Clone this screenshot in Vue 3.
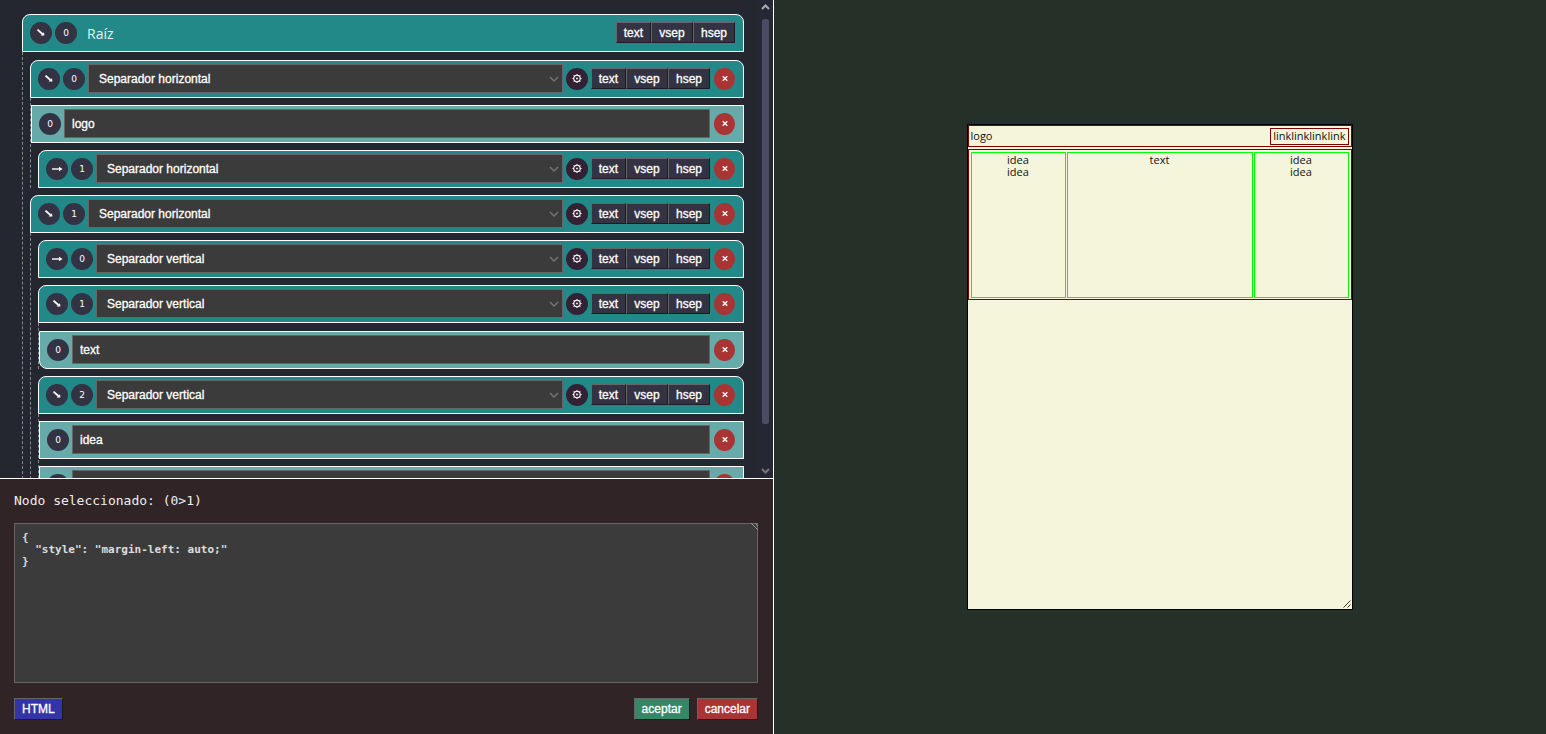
<script setup>
import { ref, h, defineComponent } from 'vue'

const SEP_H = 'Separador horizontal'
const SEP_V = 'Separador vertical'
const kinds = [SEP_H, SEP_V]

const branches = ref([
  {
    index: 0, kind: SEP_H, open: true,
    children: [
      { index: 0, leaf: true, text: 'logo' },
      { index: 1, kind: SEP_H, open: false },
    ],
  },
  {
    index: 1, kind: SEP_H, open: true,
    children: [
      { index: 0, kind: SEP_V, open: false },
      {
        index: 1, kind: SEP_V, open: true,
        children: [{ index: 0, leaf: true, only: true, text: 'text' }],
      },
      {
        index: 2, kind: SEP_V, open: true,
        children: [
          { index: 0, leaf: true, text: 'idea' },
          { index: 1, leaf: true, text: 'idea' },
        ],
      },
    ],
  },
])

const arrow = (open) =>
  h('svg', { class: 'ico', viewBox: '0 0 22 22', 'aria-hidden': 'true' }, open
    ? [
        h('path', { d: 'M7.5 7.6 L12.4 12', class: 'shaft' }),
        h('path', { d: 'M14.4 13.6 L14 10.2 L10.6 13.4 Z', class: 'solid' }),
      ]
    : [
        h('path', { d: 'M6 11 H14', class: 'shaft thin' }),
        h('path', { d: 'M16.6 11 L13 8.8 V13.2 Z', class: 'solid' }),
      ])

const cross = () =>
  h('svg', { class: 'ico', viewBox: '0 0 22 22', 'aria-hidden': 'true' }, [
    h('path', { d: 'M8.7 8.2 L13.3 12.8 M13.3 8.2 L8.7 12.8', class: 'cross' }),
  ])

const gear = () =>
  h('svg', { class: 'ico', viewBox: '0 0 22 22', 'aria-hidden': 'true' }, [
    h('circle', { cx: 11, cy: 10.5, r: 3.2, class: 'ring' }),
    h('circle', { cx: 11, cy: 10.5, r: 0.9, class: 'solid' }),
    h('path', {
      d: 'M11 6V7.5M11 13.5V15M6.5 10.5H8M14 10.5H15.5M7.7 7.2L8.8 8.3M13.2 12.7L14.3 13.8M14.3 7.2L13.2 8.3M8.8 12.7L7.7 13.8',
      class: 'teeth',
    }),
  ])

const TreeNode = defineComponent({
  name: 'TreeNode',
  props: { node: Object },
  setup(props) {
    return () => {
      const n = props.node
      const remove = h('button', { class: 'round remove', 'aria-label': 'Eliminar' }, [cross()])
      if (n.leaf) {
        return h('div', { class: ['row', 'leaf', n.only && 'only'] }, [
          h('button', { class: 'round' }, String(n.index)),
          h('input', {
            class: 'field', type: 'text', 'aria-label': 'Texto', value: n.text,
            onInput: (e) => { n.text = e.target.value },
          }),
          remove,
        ])
      }
      return h('div', { class: 'node' }, [
        h('div', { class: 'row' }, [
          h('button', {
            class: 'round', 'aria-label': 'Plegar',
            onClick: () => { n.open = !n.open },
          }, [arrow(n.open)]),
          h('button', { class: 'round' }, String(n.index)),
          h('div', { class: 'picker' }, [
            h('select', {
              class: 'field', 'aria-label': 'Tipo', value: n.kind,
              onChange: (e) => { n.kind = e.target.value },
            }, kinds.map((k) => h('option', { value: k, selected: k === n.kind }, k))),
            h('svg', { class: 'chevron', viewBox: '0 0 10 6', 'aria-hidden': 'true' }, [
              h('path', { d: 'M1 1 L5 5 L9 1' }),
            ]),
          ]),
          h('button', { class: 'round gear', 'aria-label': 'Ajustes' }, [gear()]),
          h('div', { class: 'adders' }, ['text', 'vsep', 'hsep'].map((t) => h('button', { class: 'btn' }, t))),
          remove,
        ]),
        n.open && n.children
          ? h('div', { class: 'children' }, n.children.map((c) => h(TreeNode, { node: c })))
          : null,
      ])
    }
  },
})

const nodeProps = ref('{\n  "style": "margin-left: auto;"\n}')
</script>

<template>
  <main class="app">
    <section class="editor">
      <div class="tree-pane">
        <div class="tree">
          <div class="row root">
            <button class="round" aria-label="Plegar">
              <svg class="ico" viewBox="0 0 22 22" aria-hidden="true">
                <path class="shaft" d="M7.5 7.6 L12.4 12" />
                <path class="solid" d="M14.4 13.6 L14 10.2 L10.6 13.4 Z" />
              </svg>
            </button>
            <button class="round">0</button>
            <span class="title">Raíz</span>
            <div class="adders">
              <button class="btn">text</button>
              <button class="btn">vsep</button>
              <button class="btn">hsep</button>
            </div>
          </div>
          <div class="children top">
            <TreeNode v-for="b in branches" :key="b.index" :node="b" />
          </div>
        </div>
        <div class="scroll" aria-hidden="true">
          <svg class="tip" viewBox="0 0 9 6"><path d="M1 5 L4.5 1.5 L8 5" /></svg>
          <div class="thumb"></div>
          <svg class="tip end" viewBox="0 0 9 6"><path d="M1 1 L4.5 4.5 L8 1" /></svg>
        </div>
      </div>

      <div class="props">
        <label class="selected" for="props">Nodo seleccionado: (0&gt;1)</label>
        <div class="code">
          <textarea id="props" v-model="nodeProps" spellcheck="false"></textarea>
          <svg class="grip" viewBox="0 0 7 7" aria-hidden="true"><path d="M0 0 L7 7 M4 0 L7 3" /></svg>
        </div>
        <div class="actions">
          <button class="btn html">HTML</button>
          <button class="btn accept">aceptar</button>
          <button class="btn cancel">cancelar</button>
        </div>
      </div>
    </section>

    <section class="preview">
      <div class="page">
        <div class="hbox head">
          <span>logo</span>
          <div class="hbox links"><span>link</span><span>link</span><span>link</span><span>link</span></div>
        </div>
        <div class="hbox body">
          <div class="vbox"><span>idea</span><span>idea</span></div>
          <div class="vbox wide"><span>text</span></div>
          <div class="vbox"><span>idea</span><span>idea</span></div>
        </div>
        <svg class="corner" viewBox="0 0 8 8" aria-hidden="true"><path d="M0.5 7.5 L7.5 0.5 M4.5 7.5 L7.5 4.5" /></svg>
      </div>
    </section>
  </main>
</template>

<style>
body {
  margin: 0;
}
</style>

<style scoped>
.app {
  display: grid;
  grid-template-columns: 1fr 1fr;
  height: 100vh;
  font-family: "Open Sans", "Noto Sans", sans-serif;
}
.app :deep(*) {
  box-sizing: border-box;
}
.editor {
  display: flex;
  flex-direction: column;
  min-height: 0;
  margin-right: -1px;
  border-right: 1px solid #fff;
  position: relative;
}
.tree-pane {
  flex: 1;
  display: flex;
  min-height: 0;
  background: #242730;
}
.tree {
  flex: 1;
  min-width: 0;
  padding: 14px 14px 14px 22px;
  overflow-y: auto;
  scrollbar-width: none;
}
.tree :deep(.row) {
  display: flex;
  align-items: center;
  gap: 3px;
  height: 38px;
  padding: 0 8px 1px 7px;
  background: #228888;
  border: 1px solid #fff;
  border-radius: 8px 8px 0 0;
}
.tree :deep(.leaf) {
  background: #66aaaa;
  border-radius: 0;
}
.tree :deep(.only) {
  margin-top: 1px;
  border-radius: 0 0 8px 8px;
}
.tree :deep(.children) {
  display: flex;
  flex-direction: column;
  gap: 7px;
  padding-top: 7px;
  border-left: 1px dashed #888;
}
.tree :deep(.children.top) {
  padding-top: 8px;
}
.tree :deep(.node) {
  margin-left: 7px;
}
.tree :deep(.round) {
  flex: none;
  display: flex;
  align-items: center;
  justify-content: center;
  width: 22px;
  height: 22px;
  padding: 0;
  border: 0;
  border-radius: 50%;
  background: #333344;
  color: #fff;
  font: 9px "DejaVu Sans", sans-serif;
}
.tree :deep(.gear) {
  background: #332233;
}
.tree :deep(.remove) {
  margin-left: 1px;
  width: 21px;
  background: #aa3333;
}
.tree :deep(.ico) {
  width: 22px;
  height: 22px;
  flex: none;
  fill: none;
  stroke: #fff;
}
.tree :deep(.shaft) {
  stroke-width: 1.8;
}
.tree :deep(.thin) {
  stroke-width: 1.4;
}
.tree :deep(.solid) {
  fill: #fff;
  stroke: none;
}
.tree :deep(.cross) {
  stroke-width: 1.3;
}
.tree :deep(.ring) {
  stroke-width: 1.1;
}
.tree :deep(.teeth) {
  stroke-width: 1;
}
.tree :deep(.picker) {
  flex: 1;
  position: relative;
  display: flex;
}
.tree :deep(.field) {
  flex: 1;
  min-width: 0;
  height: 29px;
  margin: 0;
  padding: 0 7px;
  appearance: none;
  border: 1px solid #666;
  border-radius: 0;
  background: #3b3b3b;
  color: #fff;
  font: 12px "Liberation Sans", sans-serif;
  -webkit-text-stroke: 0.3px #fff;
}
.tree :deep(.picker .field) {
  padding: 0 10px;
}
.tree :deep(.chevron) {
  position: absolute;
  right: 4px;
  top: 12px;
  width: 10px;
  height: 6px;
  fill: none;
  stroke: #777;
  stroke-width: 1.3;
}
.app :deep(.btn) {
  height: 21px;
  padding: 0 7px;
  border: 1px solid;
  border-color: #666 #1c1c1c #1c1c1c #666;
  border-radius: 0;
  background: #333344;
  color: #fff;
  font: 12px "Liberation Sans", sans-serif;
  -webkit-text-stroke: 0.3px #fff;
}
.tree :deep(.adders) {
  display: flex;
}
.tree :deep(.adders .btn + .btn) {
  width: 42px;
}
.title {
  flex: 1;
  padding: 1px 0 0 7px;
  color: #e4f4f4;
  font-size: 14px;
}
.scroll {
  display: flex;
  flex-direction: column;
  align-items: center;
  width: 15px;
  padding: 4px 0;
  background: #252834;
}
.tip {
  width: 9px;
  height: 6px;
  fill: none;
  stroke: #aaa;
  stroke-width: 2;
}
.end {
  stroke: #777;
}
.thumb {
  flex: 1;
  width: 7px;
  margin: 9px 0 44px;
  border-radius: 2px;
  background: #4a4c63;
}
.props {
  display: flex;
  flex-direction: column;
  padding: 14px 15px 14px 14px;
  border-top: 1px solid #fff;
  background: #302427;
}
.selected {
  height: 30px;
  line-height: 16px;
  color: #eee;
  font-family: "DejaVu Sans Mono", monospace;
  font-size: 13px;
}
.code {
  position: relative;
  display: flex;
}
textarea {
  flex: 1;
  height: 160px;
  margin: 0;
  padding: 8px 7px;
  resize: none;
  border: 1px solid #666;
  border-radius: 0;
  background: #3b3b3b;
  color: #ddd;
  font: bold 11px/12px "DejaVu Sans Mono", monospace;
}
.grip {
  position: absolute;
  top: 0;
  right: 0;
  width: 7px;
  height: 7px;
  stroke: #999;
}
.actions {
  display: flex;
  gap: 7px;
  margin-top: 15px;
}
.actions .btn {
  height: 22px;
}
.app .html {
  margin-right: auto;
  background: #3333aa;
}
.app .accept {
  background: #338866;
}
.app .cancel {
  background: #aa3333;
}
.preview {
  display: flex;
  align-items: center;
  justify-content: center;
  background: #253028;
}
.page {
  position: relative;
  display: flex;
  flex-direction: column;
  gap: 2px;
  width: 386px;
  height: 486px;
  border: 1px solid #000;
  background: #f5f5dc;
  color: #111;
  font-size: 11px;
  line-height: 12px;
}
.hbox {
  display: flex;
  border: 1px solid #800000;
}
.head {
  align-items: center;
  justify-content: space-between;
  height: 22px;
  padding: 0 2px;
}
.links {
  height: 17px;
  padding: 1px 2px;
}
.body {
  gap: 1px;
  height: 151px;
  padding: 2px 2px 1px;
}
.vbox {
  flex: 0 0 95px;
  display: flex;
  flex-direction: column;
  align-items: center;
  padding-top: 1px;
  border: 1px solid #00ff00;
}
.wide {
  flex: 1;
}
.corner {
  position: absolute;
  right: 1px;
  bottom: 1px;
  width: 8px;
  height: 8px;
  stroke: #333;
}
</style>
